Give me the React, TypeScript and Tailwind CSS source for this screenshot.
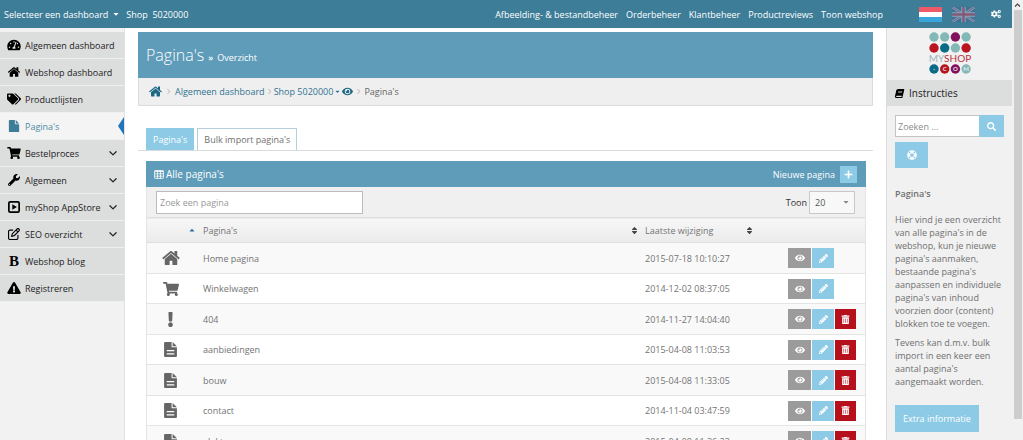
import { useState } from "react";
import {
  FaBook,
  FaCaretDown,
  FaCaretUp,
  FaCogs,
  FaExclamation,
  FaExclamationTriangle,
  FaEye,
  FaLifeRing,
  FaPencilAlt,
  FaPlus,
  FaSearch,
  FaShoppingCart,
  FaSort,
  FaTachometerAlt,
  FaTags,
  FaTrashAlt,
  FaWrench,
} from "react-icons/fa";
import { FaAngleDown, FaAngleRight, FaRegPenToSquare } from "react-icons/fa6";

function HomeIcon({ className = "" }) {
  return (
    <svg viewBox="0 96 1664 1600" className={className} fill="currentColor" aria-hidden="true">
      <path d="M1408 992v480q0 26-19 45t-45 19H960v-384H704v384H320q-26 0-45-19t-19-45V992q0-1 .5-3t.5-3l575-474 575 474q1 2 1 6zm223-69l-62 74q-8 9-21 11h-3q-13 0-21-7L832 424 140 1001q-12 8-24 7-13-2-21-11l-62-74q-8-10-7-23.500T37 878l719-599q32-26 76-26t76 26l244 204V288q0-14 9-23t23-9h192q14 0 23 9t9 23v408l219 182q10 8 11 21.500t-7 23.500z" />
    </svg>
  );
}

function FileIcon({ className = "", lines = false }) {
  return (
    <svg viewBox="0 0 12 14" className={className} fill="currentColor" aria-hidden="true">
      <path d="M0 1a1 1 0 0 1 1-1h6v4.2a.8.8 0 0 0 .8.8H12v8a1 1 0 0 1-1 1H1a1 1 0 0 1-1-1z" />
      <path d="M8 0l4 4H8z" />
      {lines && <path d="M2.500 8h7M2.500 11h7" stroke="#fff" strokeWidth="1.2" />}
    </svg>
  );
}

function PlayIcon({ className = "" }) {
  return (
    <svg viewBox="0 0 14 14" className={className} aria-hidden="true">
      <rect x="1" y="1" width="12" height="12" rx="1.6" fill="none" stroke="currentColor" strokeWidth="2" />
      <path d="M5 3.8v6.4L10.4 7z" fill="currentColor" />
    </svg>
  );
}

function BoldIcon({ className = "" }) {
  return (
    <span className={`${className} flex items-center justify-center font-['Liberation_Serif',serif] text-[15px] leading-none font-bold`}>
      B
    </span>
  );
}

function TableIcon({ className = "" }) {
  return (
    <svg viewBox="0 0 14 12" className={className} fill="none" stroke="currentColor" aria-hidden="true">
      <rect x="0.6" y="0.6" width="12.8" height="10.8" rx="1" strokeWidth="1.2" />
      <path d="M1 1.5h12" strokeWidth="1.6" />
      <path d="M1 5h12M1 8.3h12M5 1v10.5M9.2 1v10.5" strokeWidth="1.1" />
    </svg>
  );
}

function Logo() {
  const rows = [
    { y: 5, colors: ["#83b8b7", "#83b8b7", "#83105c", "#83b8b7"] },
    { y: 16, colors: ["#b9141f", "#0b6a87", "#83b8b7", "#b9141f"] },
    { y: 37, colors: ["#0b6a87", "#b9141f", "#83105c", "#83b8b7"] },
  ];
  const letters = ["·", "C", "O", "M"];

  return (
    <svg viewBox="0 0 44 42" className="h-[42px] w-11" role="img" aria-label="myshop.com">
      {rows.map((row) =>
        row.colors.map((color, i) => <circle key={`${row.y}-${i}`} cx={6 + i * 10.7} cy={row.y} r="4.7" fill={color} />)
      )}
      <text x="22" y="30" fontSize="10" textAnchor="middle" fontFamily="Lato, sans-serif" fill="#9db4bd">
        MY<tspan fill="#b9303f">SHOP</tspan>
      </text>
      {letters.map((letter, i) => (
        <text key={letter} x={6 + i * 10.7} y="39" fontSize="6" fontWeight="700" textAnchor="middle" fontFamily="Lato, sans-serif" fill="#dfe9ec">
          {letter}
        </text>
      ))}
    </svg>
  );
}

function DutchFlag() {
  return (
    <svg viewBox="0 0 23 15" className="h-[15px] w-[23px]">
      <rect width="23" height="5" fill="#ee5a68" />
      <rect y="5" width="23" height="5" fill="#fff" />
      <rect y="10" width="23" height="5" fill="#3aa7dc" />
    </svg>
  );
}

function BritishFlag() {
  return (
    <svg viewBox="0 0 23 15" className="h-[15px] w-[23px] opacity-60">
      <rect width="23" height="15" fill="#3f6a98" />
      <path d="M0 0l23 15M23 0L0 15" stroke="#a9b4cc" strokeWidth="2.6" />
      <path d="M0 0l23 15M23 0L0 15" stroke="#b0506f" strokeWidth="1" />
      <path d="M11.5 0v15M0 7.5h23" stroke="#b9c2d6" strokeWidth="4.4" />
      <path d="M11.5 0v15M0 7.5h23" stroke="#b8405f" strokeWidth="2.4" />
    </svg>
  );
}

const menu = [
  { label: "Algemeen dashboard", icon: FaTachometerAlt },
  { label: "Webshop dashboard", icon: HomeIcon },
  { label: "Productlijsten", icon: FaTags },
  { label: "Pagina's", icon: FileIcon, active: true },
  { label: "Bestelproces", icon: FaShoppingCart, sub: true },
  { label: "Algemeen", icon: FaWrench, sub: true },
  { label: "myShop AppStore", icon: PlayIcon, sub: true },
  { label: "SEO overzicht", icon: FaRegPenToSquare, sub: true },
  { label: "Webshop blog", icon: BoldIcon },
  { label: "Registreren", icon: FaExclamationTriangle },
];

const pages = [
  { name: "Home pagina", date: "2015-07-18 10:10:27", type: "home" },
  { name: "Winkelwagen", date: "2014-12-02 08:37:05", type: "cart" },
  { name: "404", date: "2014-11-27 14:04:40", type: "error" },
  { name: "aanbiedingen", date: "2015-04-08 11:03:53", type: "page" },
  { name: "bouw", date: "2015-04-08 11:33:05", type: "page" },
  { name: "contact", date: "2014-11-04 03:47:59", type: "page" },
  { name: "elektra", date: "2015-04-08 11:36:23", type: "page" },
];

function PageIcon({ type }) {
  if (type === "home") return <HomeIcon className="mx-auto size-[18px]" />;
  if (type === "cart") return <FaShoppingCart className="mx-auto size-4" />;
  if (type === "error") return <FaExclamation className="mx-auto size-[15px]" />;
  return <FileIcon lines className="mx-auto h-[15px] w-[13px]" />;
}

function TopBar() {
  return (
    <header className="flex h-7 shrink-0 items-center bg-[#3d7d98] text-white">
      <button className="ml-1 flex items-center gap-1 font-medium">
        Selecteer een dashboard
        <FaCaretDown className="size-2" />
      </button>
      <span className="ml-[6px] font-medium whitespace-pre">Shop  5020000</span>
      <nav className="ml-auto flex gap-2 font-medium">
        <a href="#bestanden">Afbeelding- &amp; bestandbeheer</a>
        <a href="#orders">Orderbeheer</a>
        <a href="#klanten">Klantbeheer</a>
        <a href="#reviews">Productreviews</a>
        <a href="#webshop">Toon webshop</a>
      </nav>
      <div className="mr-[11px] ml-9 flex items-center">
        <button aria-label="Nederlands"><DutchFlag /></button>
        <button aria-label="English" className="ml-[10px]"><BritishFlag /></button>
        <button aria-label="Instellingen" className="ml-4"><FaCogs className="size-[10px]" /></button>
      </div>
    </header>
  );
}

function Sidebar() {
  return (
    <aside className="w-[125px] shrink-0 border-r border-[#e2e2e2] bg-[#f2f2f2] pt-1">
      <ul>
        {menu.map(({ label, icon: Icon, active, sub }) => (
          <li key={label}>
            <a
              href="#"
              className={`relative flex h-[27px] items-center border-b border-[#f0f0f0] pl-[7px] ${
                active ? "bg-[#f4f4f4] text-[#4d8ba6]" : "bg-[#dcdddd] text-[#222]"
              }`}
            >
              <Icon className={`h-3 w-[14px] ${active ? "text-[#3d7d98]" : "text-black"}`} />
              <span className="ml-1">{label}</span>
              {sub && <FaAngleDown className="mr-[6px] ml-auto size-[10px]" />}
              {active && (
                <svg viewBox="0 0 6 18" className="absolute top-1 right-0 h-[18px] w-[6px]">
                  <path d="M6 0v18L0 9z" fill="#1f74bb" />
                </svg>
              )}
            </a>
          </li>
        ))}
      </ul>
    </aside>
  );
}

function Breadcrumb() {
  return (
    <nav className="flex h-7 items-center border border-t-0 border-[#dcdcdc] bg-[#efefef] pl-[10px] text-[#2f7391]">
      <a href="#" aria-label="Home"><HomeIcon className="size-[13px] text-[#1d6785]" /></a>
      <FaAngleRight className="mx-[3px] size-[7px] text-[#bbb]" />
      <a href="#">Algemeen dashboard</a>
      <FaAngleRight className="mx-px size-[7px] text-[#bbb]" />
      <button className="flex items-center gap-px">
        Shop 5020000
        <FaCaretDown className="size-[7px]" />
      </button>
      <a href="#" aria-label="Bekijk shop" className="ml-px"><FaEye className="size-[11px] text-[#1d6785]" /></a>
      <FaAngleRight className="mx-[2px] size-[7px] text-[#bbb]" />
      <span className="text-[#666]">Pagina's</span>
    </nav>
  );
}

function PageTable() {
  const [search, setSearch] = useState("");
  const [count, setCount] = useState("20");

  const visible = pages.filter((page) => page.name.toLowerCase().includes(search.toLowerCase()));

  return (
    <section className="mt-[10px] mr-[7px] ml-2">
      <div className="flex h-[26px] items-center bg-[#5e9cb9] pr-[9px] pl-2 text-white">
        <TableIcon className="h-[9px] w-[10px]" />
        <h2 className="ml-[2px] text-[10px]">Alle pagina's</h2>
        <button className="ml-auto flex items-center gap-[5px]">
          Nieuwe pagina
          <span className="flex size-[17px] items-center justify-center bg-[#8ccae5]">
            <FaPlus className="size-[9px]" />
          </span>
        </button>
      </div>
      <div className="border-x border-[#e4e4e4]">
        <div className="flex h-[30px] items-center bg-[#f0f0f0] pt-px pr-[10px] pl-[9px]">
          <input
            type="text"
            aria-label="Zoek een pagina"
            placeholder="Zoek een pagina"
            value={search}
            onChange={(e) => setSearch(e.target.value)}
            className="h-[23px] w-[207px] border border-[#bcbcbc] bg-white px-[3px] placeholder:text-[#999]"
          />
          <label htmlFor="count" className="ml-auto text-[#333]">Toon</label>
          <div className="relative ml-[2px]">
            <select
              id="count"
              value={count}
              onChange={(e) => setCount(e.target.value)}
              className="h-[23px] w-[46px] appearance-none border border-[#c8c8c8] bg-[#f8f8f8] px-[5px] text-[#555]"
            >
              <option>20</option>
              <option>50</option>
              <option>100</option>
            </select>
            <FaCaretDown className="pointer-events-none absolute top-[7px] right-[5px] size-2 text-[#888]" />
          </div>
        </div>
        <table className="w-full table-fixed text-left text-[#737373]">
          <colgroup>
            <col className="w-[51px]" />
            <col />
            <col className="w-[117px]" />
            <col className="w-[109px]" />
          </colgroup>
          <thead>
            <tr className="h-[25px] border-y border-[#dedede] bg-linear-to-b from-[#f7f7f7] to-[#ebebeb]">
              <th aria-label="Soort">
                <FaCaretUp className="mr-[2px] ml-auto size-2 text-[#2a6fa5]" />
              </th>
              <th className="pl-[5px] font-normal">
                <span className="flex items-center justify-between">
                  Pagina's <FaSort className="size-[9px] text-[#444]" />
                </span>
              </th>
              <th className="pr-[2px] pl-[6px] font-normal">
                <span className="flex items-center justify-between">
                  Laatste wijziging <FaSort className="size-[9px] text-[#444]" />
                </span>
              </th>
              <th aria-label="Acties" />
            </tr>
          </thead>
          <tbody>
            {visible.map((page) => (
              <tr key={page.name} className="border-b border-[#e4e4e4] odd:h-[31px] odd:bg-[#f9f9f9] even:h-[30px] even:bg-white">
                <td className="pr-1 text-[#666]"><PageIcon type={page.type} /></td>
                <td className="pl-[5px]">{page.name}</td>
                <td className="pl-[6px]">{page.date}</td>
                <td>
                  <div className="ml-8 flex gap-px text-white">
                    <button aria-label="Bekijken" className="flex h-5 w-[23px] items-center justify-center bg-[#9b9b9b]">
                      <FaEye className="size-[10px]" />
                    </button>
                    <button aria-label="Bewerken" className="flex h-5 w-[22px] items-center justify-center bg-[#8ccae5]">
                      <FaPencilAlt className="size-[9px]" />
                    </button>
                    {page.type !== "home" && page.type !== "cart" && (
                      <button aria-label="Verwijderen" className="flex h-5 w-[21px] items-center justify-center bg-[#b5101c]">
                        <FaTrashAlt className="size-[9px]" />
                      </button>
                    )}
                  </div>
                </td>
              </tr>
            ))}
          </tbody>
        </table>
      </div>
    </section>
  );
}

function Instructions() {
  return (
    <aside className="w-[126px] shrink-0 border-l border-[#dcdcdc] bg-[#f1f1f1]">
      <div className="flex h-[52px] justify-center pt-1">
        <Logo />
      </div>
      <h2 className="flex h-[26px] items-center gap-[5px] bg-[#dcdddd] pl-2 text-[10px] text-[#222]">
        <FaBook className="size-[9px] -skew-x-12 text-black" />
        Instructies
      </h2>
      <div className="px-2 pt-[9px] text-[#707070]">
        <form className="flex" onSubmit={(e) => e.preventDefault()}>
          <input
            type="text"
            aria-label="Zoeken"
            placeholder="Zoeken ..."
            className="h-[22px] min-w-0 flex-1 border border-r-0 border-[#c4c4c4] bg-white px-[2px] placeholder:text-[#8c8c8c]"
          />
          <button aria-label="Zoek" className="flex w-[25px] items-center justify-center bg-[#8ccae5] text-white">
            <FaSearch className="size-[9px]" />
          </button>
        </form>
        <button aria-label="Help" className="mt-[5px] flex h-[26px] w-[33px] items-center justify-center bg-[#8ccae5] text-white">
          <FaLifeRing className="size-[10px]" />
        </button>
        <div className="leading-[13px]">
          <h3 className="mt-[19px] font-semibold">Pagina's</h3>
          <p className="mt-[13px]">
            Hier vind je een overzicht van alle pagina's in de webshop, kun je nieuwe pagina's aanmaken, bestaande
            pagina's aanpassen en individuele pagina's van inhoud voorzien door (content) blokken toe te voegen.
          </p>
          <p className="mt-[6px]">Tevens kan d.m.v. bulk import in een keer een aantal pagina's aangemaakt worden.</p>
        </div>
        <button className="mt-[17px] h-[27px] bg-[#8ccae5] px-2 text-white">Extra informatie</button>
      </div>
    </aside>
  );
}

export default function App() {
  return (
    <div className="flex h-screen overflow-hidden bg-white font-['Open_Sans',sans-serif] text-[9px] leading-[13px]">
      <div className="flex min-w-0 flex-1 flex-col">
        <TopBar />
        <div className="flex min-h-0 flex-1">
          <Sidebar />
          <main className="min-w-0 flex-1 overflow-hidden px-[13px] pt-1">
            <div className="flex h-[46px] items-center gap-1 bg-[#5e9cb9] pl-2 text-white">
              <h1 className="text-[16px] leading-6 font-light">Pagina's</h1>
              <span className="pt-1 font-semibold">»</span>
              <span className="pt-1">Overzicht</span>
            </div>
            <Breadcrumb />
            <div className="mt-[22px] flex gap-[3px] border-b border-[#d8dcdf] pl-2">
              <button className="h-[22px] bg-[#8ccae5] px-[7px] text-white">Pagina's</button>
              <button className="h-[22px] border border-b-0 border-[#b7cfdb] bg-white px-[6px] text-[#707070]">
                Bulk import pagina's
              </button>
            </div>
            <PageTable />
          </main>
          <Instructions />
        </div>
      </div>
      <div className="flex w-[11px] shrink-0 flex-col items-center bg-[#f1f1f1]">
        <svg viewBox="0 0 11 10" className="h-[10px] w-[11px]">
          <path d="M3 6.5L5.5 4L8 6.5" fill="none" stroke="#444" strokeWidth="1.2" />
        </svg>
        <div className="h-[93%] w-2 bg-[#cdcdcd]" />
      </div>
    </div>
  );
}
